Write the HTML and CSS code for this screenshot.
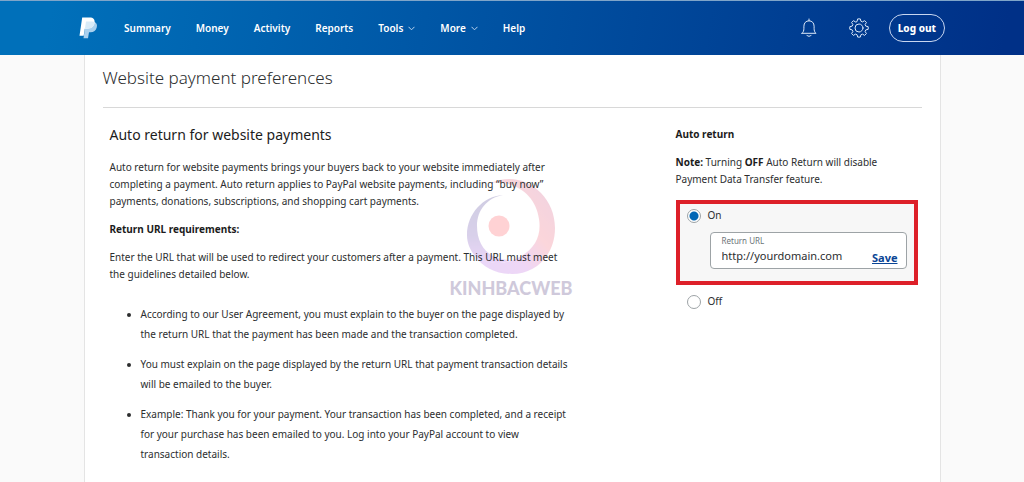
FILE: index.html
```html
<!DOCTYPE html>
<html lang="en">
<head>
<meta charset="utf-8">
<meta name="viewport" content="width=device-width, initial-scale=1">
<title>Website payment preferences</title>
<link rel="stylesheet" href="styles.css">
</head>
<body>
<header class="topbar">
  <div class="topbar-inner">
    <a class="logo" href="#" aria-label="PayPal">
      <svg width="19" height="22" viewBox="0 0 19 22" aria-hidden="true">
        <path fill="#a9d0ee" d="M7 4.500h7.500c3 1 4 3 3.300 5.800-.8 3.500-3 5-6.300 5H10l-1 6H4.500z"/>
        <path fill="#fff" d="M3.200.5h7.300c3.900 0 5.700 2 5 5.600-.8 4-3.400 5.700-7.200 5.700H5.800l-1.100 6.900H.5z"/>
        <path fill="#d9ebf8" d="M7 4.600h6.200l2.300.5v1c-.8 4-3.400 5.700-7.200 5.700H5.900z"/>
      </svg>
    </a>
    <nav class="nav">
      <a href="#">Summary</a>
      <a href="#">Money</a>
      <a href="#">Activity</a>
      <a href="#">Reports</a>
      <a href="#">Tools <svg class="chevron" width="7" height="5" viewBox="0 0 7 5" aria-hidden="true"><path d="M.5.800 3.500 3.800 6.500.8"/></svg></a>
      <a href="#">More <svg class="chevron" width="7" height="5" viewBox="0 0 7 5" aria-hidden="true"><path d="M.5.800 3.500 3.800 6.500.8"/></svg></a>
      <a href="#">Help</a>
    </nav>
    <div class="actions">
      <button class="icon-button" type="button" aria-label="Notifications">
        <svg width="16" height="20" viewBox="0 0 16 20" aria-hidden="true"><path d="M8 1v1.800M1 15.300h14c-1.400-1.200-1.900-2.600-1.900-5V8.200C13.100 5 11 2.800 8 2.800S2.900 5 2.900 8.200v2.100c0 2.400-.5 3.800-1.900 5zM5.800 17.300c.5 1.400 3.900 1.400 4.400 0"/></svg>
      </button>
      <button class="icon-button" type="button" aria-label="Settings">
        <svg width="20" height="20" viewBox="0 0 20 20" aria-hidden="true"><path d="M8.100 3.200 8.700.9h2.600l.6 2.300 1.600.7 2.100-1.200 1.800 1.800-1.300 2.100.7 1.500 2.400.6v2.600l-2.400.6-.7 1.600 1.300 2-1.800 1.900-2.100-1.300-1.600.7-.6 2.300H8.700l-.6-2.300-1.600-.7-2.100 1.300-1.800-1.900 1.300-2-.7-1.600-2.400-.6V8.700l2.400-.6.7-1.500-1.300-2.100 1.800-1.800 2.100 1.200z"/><circle cx="10" cy="10" r="4"/></svg>
      </button>
      <button class="logout" type="button">Log out</button>
    </div>
  </div>
</header>
<main class="card">
  <h1 class="title">Website payment preferences</h1>
  <div class="columns">
    <section class="info">
      <h2 class="subtitle">Auto return for website payments</h2>
      <p class="text">Auto return for website payments brings your buyers back to your website immediately after<br>completing a payment. Auto return applies to PayPal website payments, including “buy now”<br>payments, donations, subscriptions, and shopping cart payments.</p>
      <h3 class="label">Return URL requirements:</h3>
      <p class="text">Enter the URL that will be used to redirect your customers after a payment. This URL must meet<br>the guidelines detailed below.</p>
      <ul class="rules">
        <li>According to our User Agreement, you must explain to the buyer on the page displayed by<br>the return URL that the payment has been made and the transaction completed.</li>
        <li>You must explain on the page displayed by the return URL that payment transaction details<br>will be emailed to the buyer.</li>
        <li>Example: Thank you for your payment. Your transaction has been completed, and a receipt<br>for your purchase has been emailed to you. Log into your PayPal account to view<br>transaction details.</li>
      </ul>
      <div class="watermark" aria-hidden="true">
        <svg width="90" height="98" viewBox="0 0 90 98">
          <defs>
            <linearGradient id="ring" x1="0" y1="1" x2="1" y2="0"><stop offset="0" stop-color="#c9a0f0"/><stop offset=".35" stop-color="#d79bea"/><stop offset=".6" stop-color="#f79aa6"/><stop offset="1" stop-color="#d890b4"/></linearGradient>
            <linearGradient id="arc" x1="0" y1="0" x2="0" y2="1"><stop offset="0" stop-color="#8a84b8"/><stop offset=".6" stop-color="#a08ccc"/><stop offset="1" stop-color="#cf9af0"/></linearGradient>
          </defs>
          <path fill="url(#ring)" d="M25 6C55-8 89 16 89 51c0 28-20 46-43 46-17 0-29-7-37-18 13 8 26 9 38 4 20-8 29-22 26-41C70 18 49 3 25 6z"/>
          <path fill="url(#arc)" d="M37 18C17 19 1 37 1 58c0 8 3 15 8 21 11 8 24 9 36 4C22 83 11 68 11 49c0-16 10-28 26-31z"/>
          <circle cx="33" cy="49" r="10.500" fill="#ff9095"/>
        </svg>
        <span class="watermark-name">KINHBACWEB</span>
      </div>
    </section>
    <form class="settings">
      <h3 class="label">Auto return</h3>
      <p class="text"><b>Note:</b> Turning <b>OFF</b> Auto Return will disable<br>Payment Data Transfer feature.</p>
      <div class="choice choice-on">
        <label class="option"><input type="radio" name="auto" checked>On</label>
        <div class="field">
          <div class="field-main">
            <label class="field-label" for="url">Return URL</label>
            <input class="field-input" id="url" type="text" value="http://yourdomain.com">
          </div>
          <button class="save" type="button">Save</button>
        </div>
      </div>
      <div class="choice">
        <label class="option"><input type="radio" name="auto">Off</label>
      </div>
    </form>
  </div>
</main>
</body>
</html>
```
FILE: styles.css
```css
* { box-sizing: border-box; }
html { min-height: 100%; }
body {
  margin: 0;
  min-height: 100vh;
  display: flex;
  flex-direction: column;
  overflow: hidden;
  background: #fafafa;
  color: #2c2e2f;
  font: 10px/17px "Noto Sans", sans-serif;
}
h1, h2, h3, p, ul { margin: 0; }
button, input { font: inherit; }
.topbar {
  border-top: 1px solid #7fa5c9;
  background: linear-gradient(100deg, #0070ba 5%, #003087 98%);
}
.topbar-inner {
  display: flex;
  align-items: center;
  width: 100%;
  max-width: 866px;
  height: 54px;
  margin: 0 auto;
}
.logo, .logo svg { display: block; }
.nav {
  display: flex;
  gap: 25px;
  margin-left: 26px;
}
.nav a {
  display: flex;
  align-items: center;
  gap: 5px;
  color: #fff;
  font-size: 10px;
  font-weight: 600;
  text-decoration: none;
}
.chevron { fill: none; stroke: #b9d3ee; }
.actions {
  display: flex;
  align-items: center;
  gap: 32px;
  margin-left: auto;
}
.icon-button {
  padding: 0;
  border: 0;
  background: none;
}
.icon-button svg {
  display: block;
  fill: none;
  stroke: #dbe8f8;
  stroke-linejoin: round;
  stroke-linecap: round;
}
.logout {
  height: 28px;
  margin-left: -12px;
  padding: 0 8px;
  border: 1px solid #c8d6f0;
  border-radius: 14px;
  background: none;
  color: #fff;
  font-size: 10px;
  font-weight: 800;
}
.card {
  flex: 1;
  width: 100%;
  max-width: 857px;
  margin: 0 auto;
  padding: 8px 18px 0;
  border: solid #e4e4e4;
  border-width: 0 1px;
  background: #fff;
}
.title {
  padding-bottom: 14px;
  border-bottom: 1px solid #d8d8d8;
  font-size: 17px;
  font-weight: 300;
  line-height: 30px;
}
.columns {
  display: flex;
  justify-content: space-between;
  padding: 18px 4px 0 7px;
}
.info {
  position: relative;
  z-index: 0;
}
.subtitle {
  margin-bottom: 16px;
  color: #1c1c1c;
  font-size: 14px;
  font-weight: 400;
  line-height: 17px;
}
.label {
  margin: 11px 0;
  color: #1c1c1c;
  font-size: 10px;
  font-weight: 700;
  line-height: 17px;
}
.text b { color: #1c1c1c; }
.rules {
  display: grid;
  gap: 10px;
  margin-top: 21px;
  padding-left: 31px;
  line-height: 20px;
}
.watermark {
  position: absolute;
  z-index: -1;
  top: 51px;
  left: 340px;
  display: flex;
  flex-direction: column;
  align-items: center;
  gap: 3px;
  opacity: 0.4;
}
.watermark-name {
  color: #8a7aa6;
  font: 900 18px/20px Lato, sans-serif;
}
.settings {
  width: 242px;
}
.settings .label { margin-top: 0; }
.choice { padding: 8px 11px; }
.choice-on {
  margin-top: 12px;
  padding: 3px 7px 12px;
  border: 4px solid #dd2029;
  background: #f7f7f7;
}
.option {
  display: flex;
  align-items: center;
  gap: 7px;
}
.option input {
  appearance: none;
  width: 14px;
  height: 14px;
  margin: 0;
  border: 1px solid #9da3a6;
  border-radius: 50%;
  background: #fff;
}
.option input:checked {
  background: radial-gradient(circle, #0066b5 0 4px, #fff 5px);
}
.field {
  display: flex;
  align-items: flex-end;
  height: 37px;
  margin: 8px 0 0 23px;
  padding: 3px 8px 3px 11px;
  border: 1px solid #9da3a6;
  border-radius: 4px;
  background: #fff;
}
.field-main {
  display: flex;
  flex: 1;
  flex-direction: column;
  min-width: 0;
  padding-bottom: 2px;
}
.field-label {
  color: #6c7378;
  font-size: 8px;
  line-height: 12px;
}
.field-input {
  width: 100%;
  height: 16px;
  padding: 0;
  border: 0;
  outline: 0;
  background: none;
  color: #2c2e2f;
  font-size: 11px;
}
.save {
  padding: 0;
  border: 0;
  background: none;
  color: #0a4595;
  font-size: 11px;
  font-weight: 700;
  line-height: 15px;
  text-decoration: underline;
}
```
